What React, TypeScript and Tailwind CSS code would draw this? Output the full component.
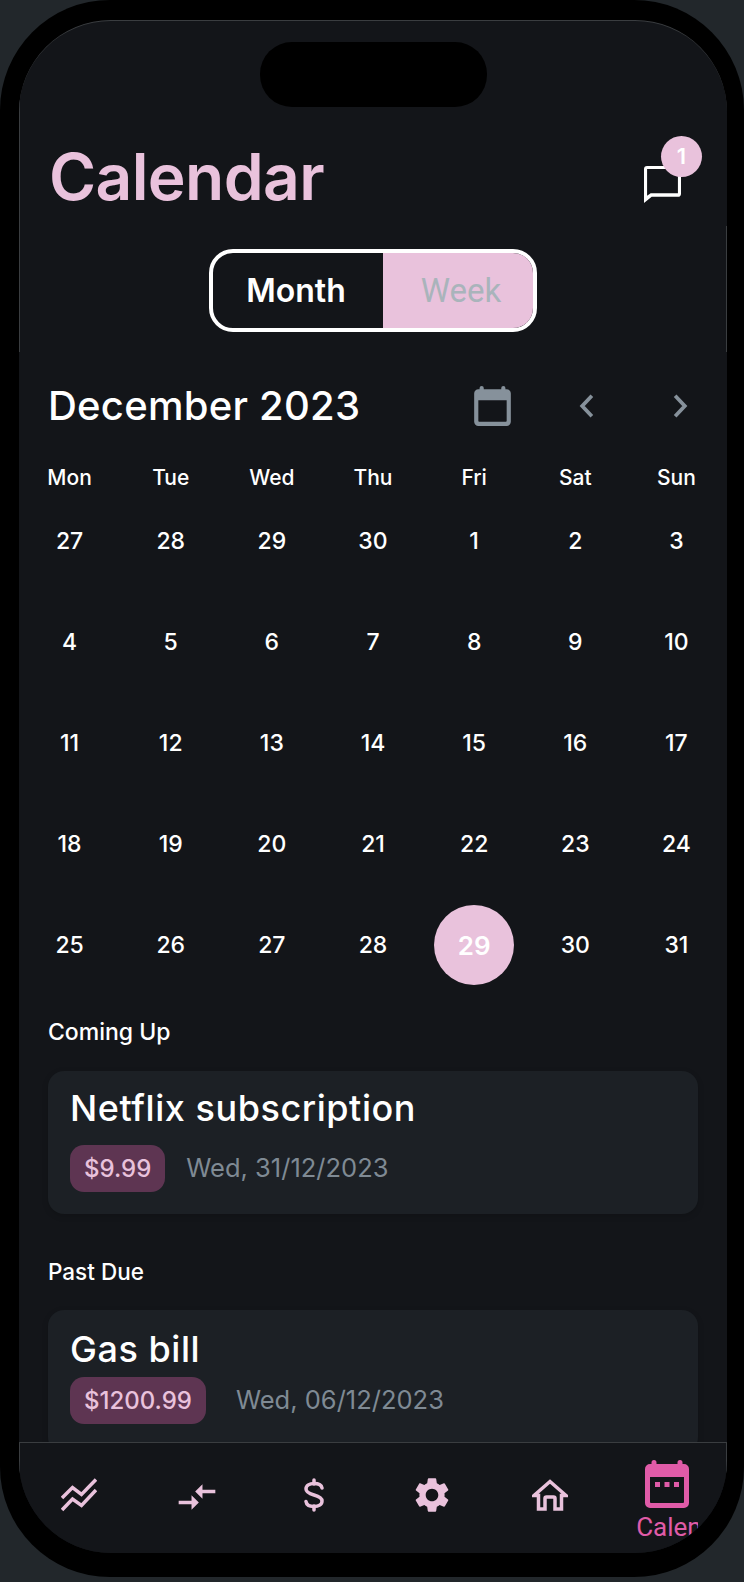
import { MdCompareArrows, MdSettings } from "react-icons/md";

const sans = "font-['Inter','Noto_Sans',sans-serif]";

const weekdays = ["Mon", "Tue", "Wed", "Thu", "Fri", "Sat", "Sun"];
const dates = [
  27, 28, 29, 30, 1, 2, 3, 4, 5, 6, 7, 8, 9, 10, 11, 12, 13, 14, 15, 16, 17, 18, 19, 20, 21, 22, 23, 24, 25, 26, 27, 28,
  29, 30, 31,
];

function CalendarIcon({ className, dots }: { className: string; dots?: boolean }) {
  return (
    <svg viewBox="0 0 44 48" className={className} fill="currentColor">
      <path d="M9 0a2.5 2.5 0 0 1 2.5 2.5V4h21V2.500a2.500 2.500 0 0 1 5 0V4H39a5 5 0 0 1 5 5v34a5 5 0 0 1-5 5H5a5 5 0 0 1-5-5V9a5 5 0 0 1 5-5h1.500V2.500A2.500 2.500 0 0 1 9 0ZM5 17v25a1 1 0 0 0 1 1h32a1 1 0 0 0 1-1V17H5Z" />
      {dots && (
        <>
          <rect x="10" y="22" width="5" height="5" />
          <rect x="19.500" y="22" width="5" height="5" />
          <rect x="29" y="22" width="5" height="5" />
        </>
      )}
    </svg>
  );
}

function Bill({
  title,
  amount,
  date,
  topClass,
  gapClass,
  dateClass,
}: {
  title: string;
  amount: string;
  date: string;
  topClass: string;
  gapClass: string;
  dateClass: string;
}) {
  return (
    <div className={`mx-[29px] h-[143px] shrink-0 rounded-2xl bg-[#1c2025] pl-[22px] shadow-[0_2px_6px_rgba(0,0,0,0.15)] ${topClass}`}>
      <div className="text-[36px] leading-[44px] font-medium tracking-[0.55px] text-white">{title}</div>
      <div className={`flex items-center ${gapClass}`}>
        <span className="flex h-[47px] items-center rounded-[14px] bg-[#5e3552] px-[14px] text-[24px] font-medium text-[#e9c2dc]">
          {amount}
        </span>
        <span className={`text-[25.5px] text-[#7f8a94] ${dateClass}`}>{date}</span>
      </div>
    </div>
  );
}

export default function App() {
  return (
    <div className={`relative h-[1582px] w-[744px] overflow-hidden bg-[#22272b] ${sans}`}>
      {/* phone frame */}
      <div className="h-[1577px] w-[744px] rounded-b-[110px] rounded-t-[110px] bg-black pt-[20px] pl-[19px]">
        <div className="relative flex h-[1533px] w-[708px] flex-col overflow-hidden rounded-[92px] border-t border-[#3a3d40] bg-[#131519]">
          <div className="absolute top-[21px] left-[241px] h-[65px] w-[227px] rounded-[32px] bg-black" />

          <div className="flex-1 overflow-hidden">
            <div className="border-l border-[#3a3d40]">
              <div className="box-content flex h-[87px] items-center justify-between pt-[112px] pb-[6px] pr-[26px] pl-[29px]">
                <h1 className="text-[64px] leading-[76px] font-semibold tracking-[-0.6px] text-[#e9c2dc]">Calendar</h1>
                <div className="relative mt-[16px] mr-[20px] h-[37px] w-[37px] text-white">
                  <svg viewBox="0 0 36 36" className="h-full w-full" fill="currentColor">
                    <path d="M3 0h30a3 3 0 0 1 3 3v24a3 3 0 0 1-3 3H7.500L0 36V3a3 3 0 0 1 3-3Zm0 3v26l3.500-2.500H33V3H3Z" />
                  </svg>
                  <span className="absolute -top-[30px] left-[17px] flex h-[41px] w-[41px] items-center justify-center rounded-full bg-[#e9c2dc] text-[22px] font-semibold">
                    1
                  </span>
                </div>
              </div>

              <div className="flex justify-center border-r border-[#3a3d40] pt-[23px] pb-[20px]">
                <div className="flex h-[83px] w-[328px] overflow-hidden rounded-[24px] border-4 border-white">
                  <div className="flex w-[170px] items-center justify-center pr-[4px] text-[32px] font-semibold text-white">Month</div>
                  <div className="flex flex-1 items-center justify-center bg-[#e9c2dc] pl-[6px] font-['Roboto',sans-serif] text-[33px] text-[#a9b4bb]">
                    Week
                  </div>
                </div>
              </div>
            </div>

            <div className="mt-[24px] flex h-[60px] items-center pr-[39px] pl-[29px]">
              <h2 className="flex-1 text-[40px] font-medium tracking-[0.25px] text-white">December 2023</h2>
              <CalendarIcon className="mr-[68px] h-[40px] w-[37px] text-[#86919b]" />
              <svg viewBox="0 0 14 22" className="h-[24px] w-[15px] text-[#86919b]" fill="none" stroke="currentColor" strokeWidth="3.500">
                <path d="M12 1.500 3 11l9 9.500" />
              </svg>
              <svg viewBox="0 0 14 22" className="ml-[79px] h-[24px] w-[15px] text-[#86919b]" fill="none" stroke="currentColor" strokeWidth="3.500">
                <path d="m2 1.500 9 9.500-9 9.500" />
              </svg>
            </div>

            <div className="mt-[28px] grid grid-cols-7 text-white">
              {weekdays.map((d) => (
                <div key={d} className="flex h-[27px] items-center justify-center text-[21px] font-medium">
                  {d}
                </div>
              ))}
              {dates.map((d, i) => (
                <div key={i} className="flex h-[101px] items-center justify-center text-[23px] font-[550]">
                  {i === 32 ? (
                    <span className="-mt-[1px] flex h-[80px] w-[80px] items-center justify-center rounded-full bg-[#e9c2dc] text-[26px] font-semibold">
                      {d}
                    </span>
                  ) : (
                    d
                  )}
                </div>
              ))}
            </div>

            <div className="mt-[22px] h-[28px] pl-[29px] text-[23px] leading-[28px] font-medium text-white">Coming Up</div>
            <div className="mt-[25px]">
              <Bill title="Netflix subscription" amount="$9.99" date="Wed, 31/12/2023" topClass="pt-[15px]" gapClass="mt-[15px]" dateClass="ml-[21px]" />
            </div>
            <div className="mt-[44px] h-[28px] pl-[29px] text-[22.5px] leading-[28px] font-medium text-white">Past Due</div>
            <div className="mt-[24px]">
              <Bill title="Gas bill" amount="$1200.99" date="Wed, 06/12/2023" topClass="pt-[17px]" gapClass="mt-[6px]" dateClass="ml-[30px]" />
            </div>
          </div>

          {/* bottom nav */}
          <nav className="relative flex h-[111px] shrink-0 border-x border-t border-[#3a3d40] bg-[#131519] text-[#e9c2dc]">
            <div className="flex flex-1 justify-center pt-[35px]">
              <svg viewBox="0 0 36 36" className="h-[36px] w-[36px]" fill="none" stroke="currentColor" strokeWidth="3.500">
                <path d="M1 20 11.500 9.500 20.500 16.500 35 1.500" />
                <path d="M1 32 11.500 21 20.500 27.500 35 12" />
              </svg>
            </div>
            <div className="flex flex-1 justify-center pt-[32px]">
              <MdCompareArrows className="h-[44px] w-[44px]" />
            </div>
            <div className="flex flex-1 justify-center pt-[35px]">
              <svg viewBox="0 0 20 34" className="h-[34px] w-[20px]" fill="none" stroke="currentColor" strokeWidth="3.500" strokeLinecap="round">
                <path d="M10 2v4M10 28v4" />
                <path d="M18 10c-.500-3-3.500-4.500-8-4.500-4.500 0-8 2-8 5.500 0 3 2.500 4.500 8 6 5.500 1.500 8 3 8 6 0 3.500-3.500 5.500-8 5.500s-7.500-1.500-8-5" />
              </svg>
            </div>
            <div className="flex flex-1 justify-center pt-[31px]">
              <MdSettings className="h-[42px] w-[42px]" />
            </div>
            <div className="flex flex-1 justify-center pt-[36px]">
              <svg viewBox="0 0 36 32" className="h-[32px] w-[36px]" fill="none" stroke="currentColor" strokeWidth="3.500">
                <path d="M2 16.500 18 2.500l16 14h-4.500v13.500h-6.500V19.500a1.500 1.500 0 0 0-1.500-1.500h-7a1.500 1.500 0 0 0-1.500 1.500V30H6.500V16.500H2Z" />
              </svg>
            </div>
            <div className="flex flex-1 flex-col items-center pt-[17px] text-[#e05ba8]">
              <CalendarIcon dots className="h-[48px] w-[44px]" />
              <div className="mt-[3px] w-[62px] overflow-hidden font-['Roboto',sans-serif] text-[26px] leading-[32px] whitespace-nowrap">
                Calendar
              </div>
            </div>
          </nav>
        </div>
      </div>
    </div>
  );
}
